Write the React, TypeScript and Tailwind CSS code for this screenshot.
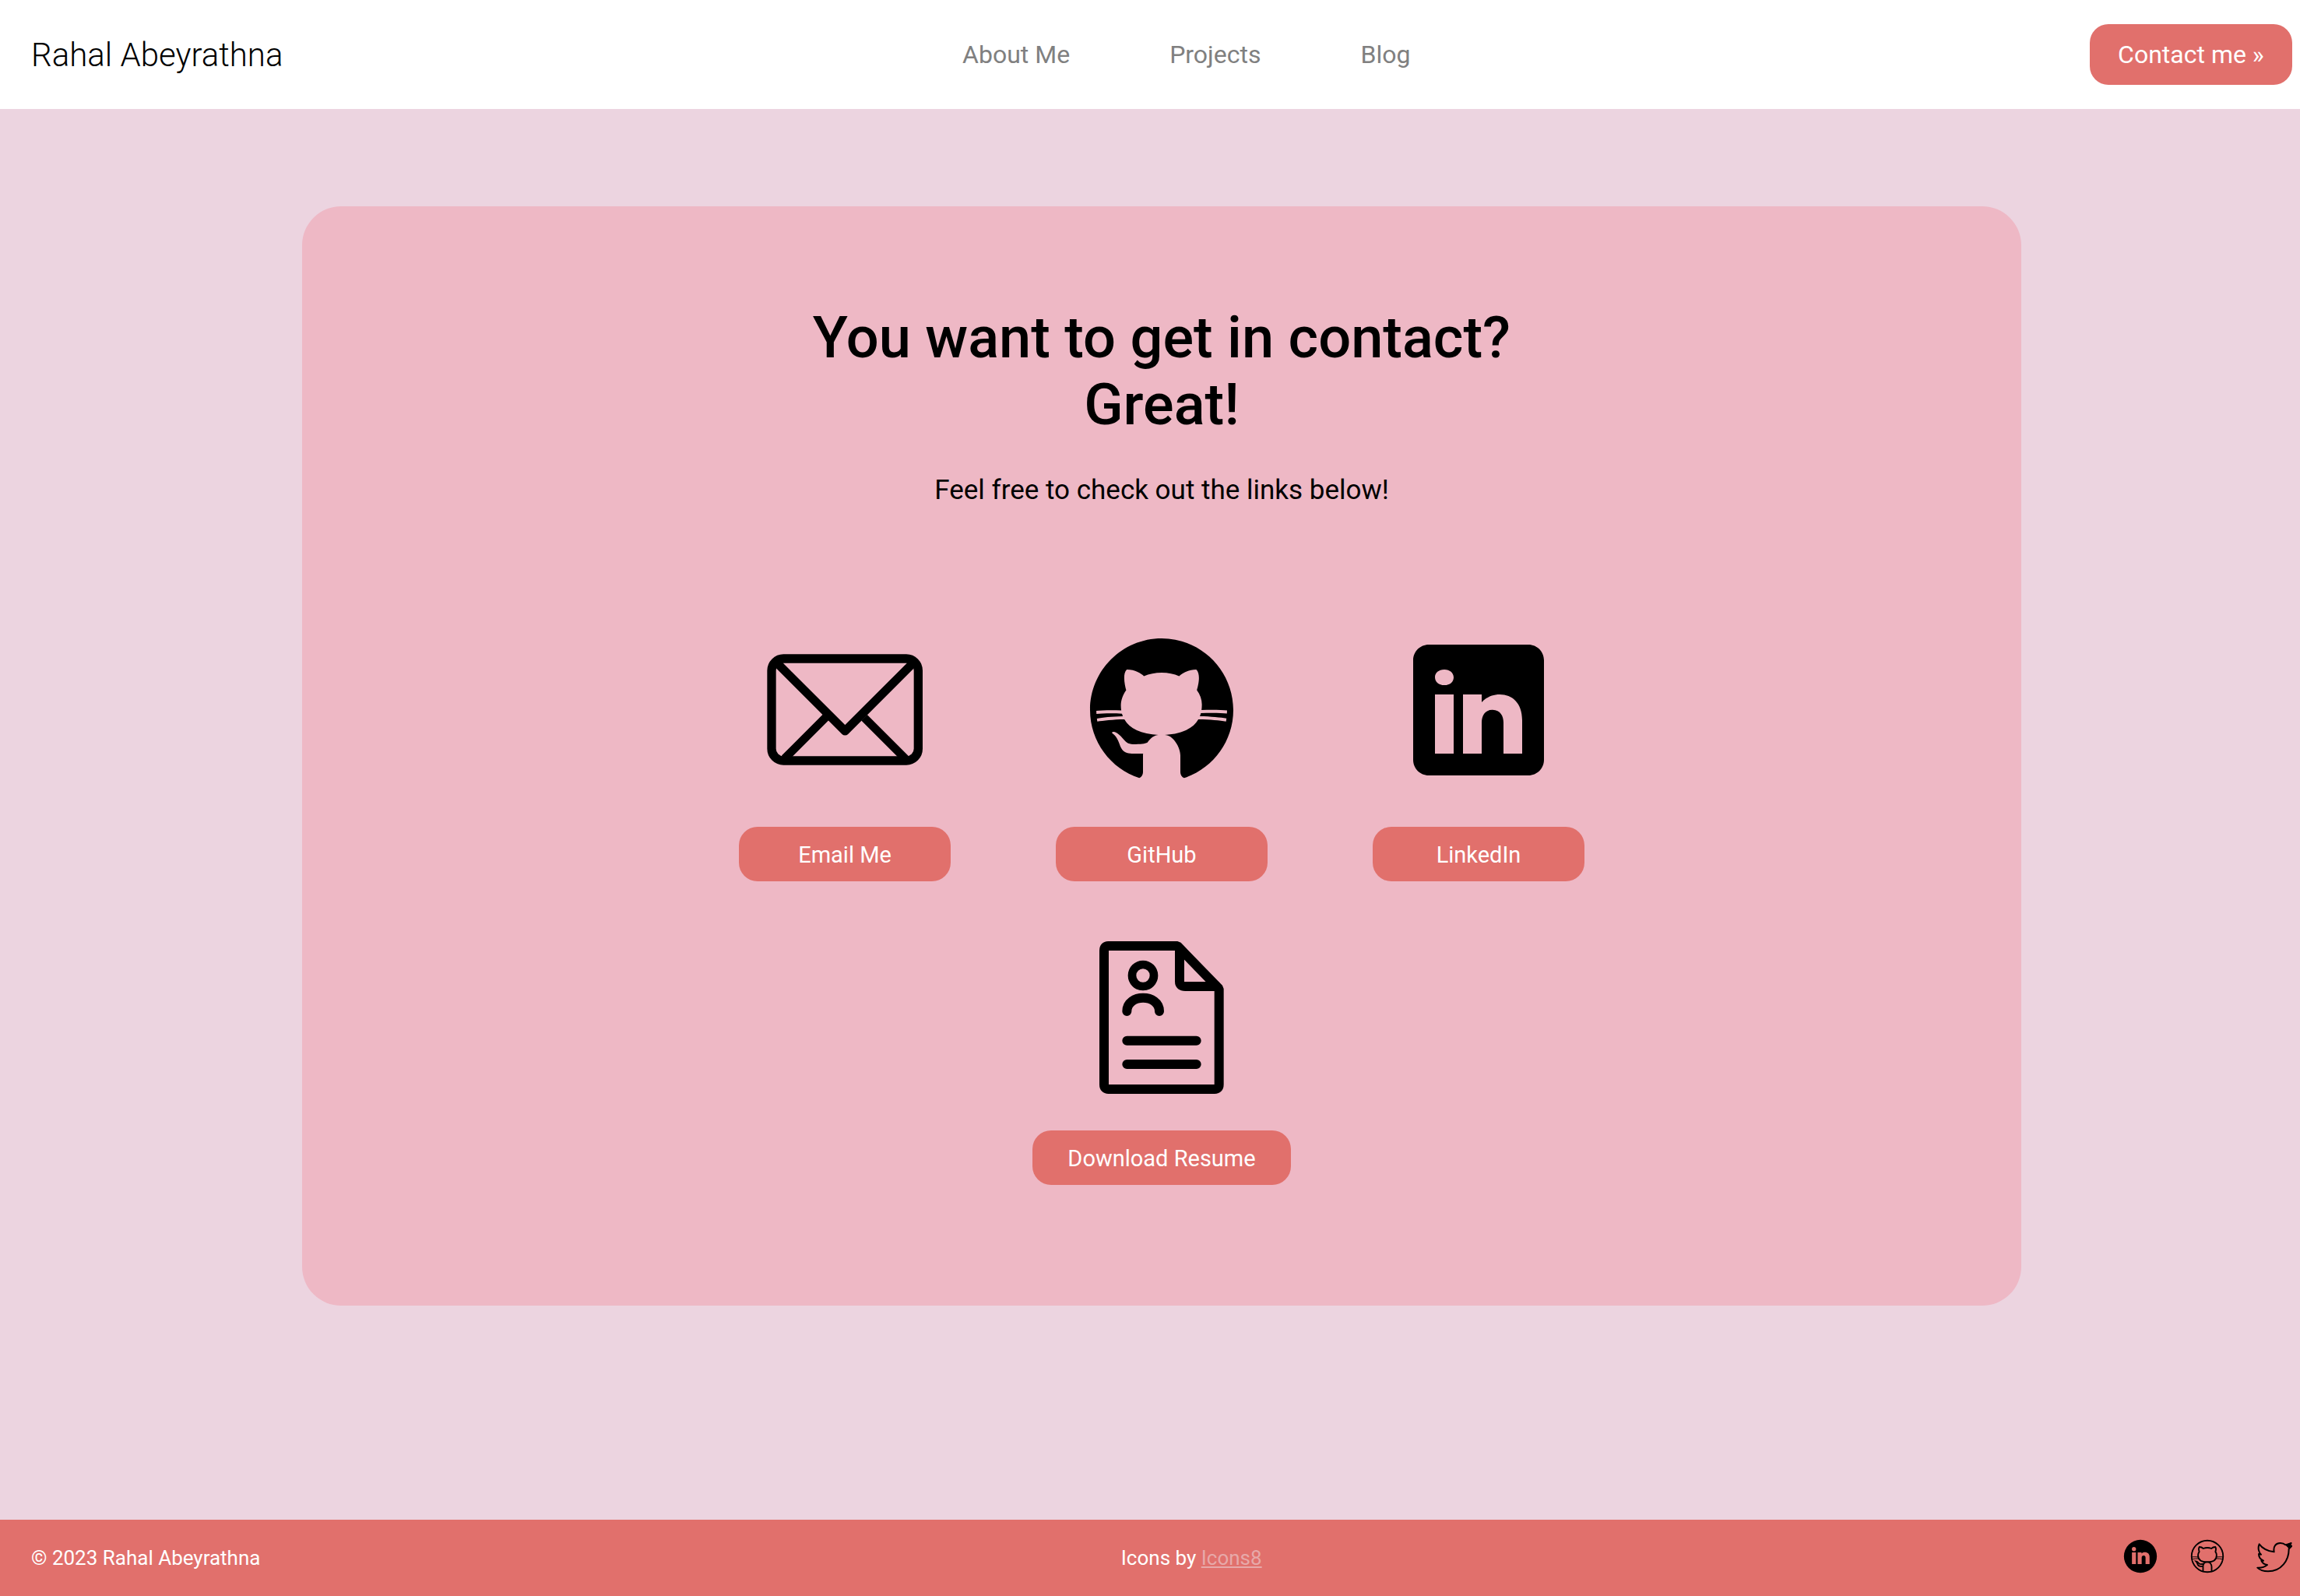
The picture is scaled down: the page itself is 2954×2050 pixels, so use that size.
import type { ReactNode } from "react";

function EnvelopeIcon() {
  return (
    <svg viewBox="0 0 600 600" className="h-[200px] w-[200px]" fill="none" stroke="#000" aria-hidden="true">
      <rect x="18" y="102" width="565" height="393" rx="46" strokeWidth="34" />
      <path d="M32 112 L301 381 L570 112" strokeWidth="33" strokeLinejoin="round" />
      <path d="M227 328 L68 487 M375 329 L534 488" strokeWidth="32" />
    </svg>
  );
}

function GitHubIcon() {
  return (
    <svg viewBox="0 0 50 50" className="h-[200px] w-[200px]" aria-hidden="true">
      <path d="M17.791,46.836C18.502,46.53,19,45.823,19,45v-5.4c0-0.197,0.016-0.402,0.041-0.61C19.027,38.994,19.014,38.997,19,39c0,0-3,0-3.6,0c-1.5,0-2.8-0.6-3.4-1.8c-0.7-1.3-1-3.5-2.8-4.7C8.9,32.3,9.1,32,9.7,32c0.6,0.1,1.9,0.9,2.7,2c0.9,1.1,1.8,2,3.4,2c2.487,0,3.82-0.125,4.622-0.555C21.356,34.056,22.649,33,24,33v-0.025c-5.668-0.182-9.289-2.066-10.975-4.975c-3.665,0.042-6.856,0.405-8.677,0.707c-0.058-0.327-0.108-0.656-0.151-0.987c1.797-0.296,4.843-0.647,8.345-0.714c-0.112-0.276-0.209-0.559-0.291-0.849c-3.511-0.178-6.541-0.039-8.187,0.097c-0.02-0.332-0.047-0.663-0.051-0.999c1.649-0.135,4.597-0.27,8.018-0.111c-0.079-0.5-0.13-1.011-0.13-1.543c0-1.7,0.6-3.5,1.7-5c-0.5-1.7-1.2-5.3,0.2-6.6c2.7,0,4.6,1.3,5.5,2.1C21,13.4,22.9,13,25,13s4,0.4,5.6,1.1c0.9-0.8,2.8-2.1,5.5-2.1c1.5,1.4,0.7,5,0.2,6.6c1.1,1.5,1.7,3.2,1.6,5c0,0.484-0.045,0.951-0.11,1.409c3.499-0.172,6.527-0.034,8.204,0.102c-0.002,0.337-0.033,0.666-0.051,0.999c-1.671-0.138-4.775-0.28-8.359-0.089c-0.089,0.336-0.197,0.663-0.325,0.98c3.546,0.046,6.665,0.389,8.548,0.689c-0.043,0.332-0.093,0.661-0.151,0.987c-1.912-0.306-5.171-0.664-8.879-0.682C35.112,30.873,31.557,32.75,26,32.969V33c2.6,0,5,3.9,5,6.6V45c0,0.823,0.498,1.53,1.209,1.836C41.37,43.804,48,35.164,48,25C48,12.318,37.683,2,25,2S2,12.318,2,25C2,35.164,8.63,43.804,17.791,46.836z" />
    </svg>
  );
}

function LinkedInIcon() {
  return (
    <svg viewBox="0 0 50 50" className="h-[200px] w-[200px]" aria-hidden="true">
      <path d="M41,4H9C6.24,4,4,6.24,4,9v32c0,2.76,2.24,5,5,5h32c2.76,0,5-2.24,5-5V9C46,6.24,43.76,4,41,4z M17,20v19h-6V20H17z M11,14.47c0-1.4,1.2-2.47,3-2.47s2.93,1.07,3,2.47c0,1.4-1.12,2.53-3,2.53C12.2,17,11,15.87,11,14.47z M39,39h-6c0,0,0-9.26,0-10c0-2-1-4-3.5-4.04h-0.08C27,24.96,26,27.02,26,29c0,0.91,0,10,0,10h-6V20h6v2.56c0,0,1.93-2.56,5.81-2.56c3.97,0,7.19,2.73,7.19,8.26V39z" />
    </svg>
  );
}

function ResumeIcon() {
  return (
    <svg viewBox="0 0 630 630" className="h-[210px] w-[210px]" fill="none" stroke="#000" strokeWidth="36" aria-hidden="true">
      <path d="M376 39 H109 Q93 39 93 57 V573 Q93 591 110 591 H519 Q536 591 536 573 V204 Z" strokeLinejoin="bevel" />
      <path d="M384 40 V176 Q384 195 406 195 H536" />
      <circle cx="243" cy="153" r="42" strokeWidth="32" />
      <path d="M181 291 C181 222 306 222 306 291" strokeLinecap="round" />
      <path d="M181 404 H449 M181 495 H449" strokeLinecap="round" />
    </svg>
  );
}

function LinkedInSmall() {
  return (
    <svg viewBox="0 0 50 50" className="h-[46px] w-[46px]" aria-hidden="true">
      <path
        fillRule="evenodd"
        d="M25 2a23 23 0 1 0 0 46a23 23 0 1 0 0-46z M16 12a2.9 2.9 0 1 1 0 5.8a2.9 2.9 0 0 1 0-5.8z M13.2 19.6h5.6v16.2h-5.6z M21.2 19.6h5.4v1.6c1-1.1 2.6-1.8 4.6-1.8c4 0 6.6 2.4 6.6 6.8v9.6h-5.6v-8.8c0-2-1-3-2.6-3s-2.8 1-2.8 3v8.8h-5.6z"
      />
    </svg>
  );
}

function GitHubSmall() {
  return (
    <svg viewBox="0 0 50 50" className="h-[46px] w-[46px]" fill="none" stroke="#000" strokeWidth="2" aria-hidden="true">
      <circle cx="25" cy="25" r="22" />
      <path d="M13.7 18.6C13.2 16.9 12.6 13.3 13.8 12C16.6 12 18.5 13.3 19.4 14.1C21 13.4 22.9 13 25 13s4 .4 5.6 1.1C31.5 13.3 33.4 12 36.2 12C37.4 13.4 36.8 17 36.3 18.6C37.4 20.1 38 21.8 37.9 23.6C37.9 29.8 33.2 33 25 33S12 29.8 12 23.6C12 21.9 12.6 20.1 13.7 18.6z" />
      <path d="M19 47V38.5C19 35.5 21.5 33 24 33H26C28.6 33 31 36.5 31 39.6V47" />
      <path d="M20.4 35.5C19.500 36 18 36 15.800 36C14.200 36 13.300 35.100 12.400 34C11.600 32.900 10.300 32.100 9 32C10.700 33.700 11.300 35.900 12 37.200C12.600 38.400 13.900 39 15.400 39H19" />
      <path d="M3 26C6 25.7 9 25.7 12.2 26M3.5 29C6.5 28.5 9.5 28.2 13 28.1M37.8 26C41 25.7 44 25.7 47 26M37 28.1C40.5 28.2 43.5 28.5 46.5 29" strokeWidth="1" />
    </svg>
  );
}

function TwitterSmall() {
  return (
    <svg viewBox="0 0 138 138" className="h-[46px] w-[46px]" fill="none" stroke="#000" strokeWidth="6" strokeLinejoin="round" aria-hidden="true">
      <path d="M11 22C24 40 44 49 68 52C64 30 76 18 92 18C101 18 107 20 112 25C119 24 126 21 134 18C132 24 129 27 125 30L136 29C133 34 129 37 125 40C126 84 96 127 45 127C28 127 13 122 4 113C18 114 32 110 42 102C31 101 23 95 19 86H27C16 81 9 72 9 60L18 62C8 53 5 36 11 22Z" />
      <path d="M112 25L133 19L124 30L135 30L125 38Z" fill="#000" strokeWidth="2" />
    </svg>
  );
}

const navLinks = ["About Me", "Projects", "Blog"];

function ContactItem({ icon, label, wide = false }: { icon: ReactNode; label: string; wide?: boolean }) {
  return (
    <div className={wide ? "flex flex-col items-center gap-10" : "flex flex-col items-center gap-[50px]"}>
      {icon}
      <button
        type="button"
        className={
          wide
            ? "h-[70px] w-[332px] rounded-3xl bg-[#e1706c] pt-[2px] text-[29px] leading-[34px] text-white"
            : "h-[70px] w-[272px] rounded-3xl bg-[#e1706c] pt-[2px] text-[29px] leading-[34px] text-white"
        }
      >
        {label}
      </button>
    </div>
  );
}

export default function App() {
  return (
    <div className="flex min-h-screen flex-col bg-[#ecd4e0] font-[Roboto,sans-serif] text-black">
      <header className="flex h-[140px] items-center justify-between bg-white pr-[10px] pl-10">
        <a href="#home" className="pt-[2px] text-[42px] leading-[50px] font-light">
          Rahal Abeyrathna
        </a>
        <nav className="flex gap-32 text-[32px] leading-[38px] text-[#808080]">
          {navLinks.map((label) => (
            <a key={label} href={"#" + label.toLowerCase().replace(" ", "-")}>
              {label}
            </a>
          ))}
        </nav>
        <button type="button" className="h-[78px] w-[260px] rounded-3xl bg-[#e1706c] text-[32px] leading-[38px] text-white">
          Contact me »
        </button>
      </header>

      <main className="flex-1 pt-[125px] pr-[358px] pb-[275px] pl-[388px]">
        <section className="flex flex-col items-center rounded-[50px] bg-[#eeb8c5] pt-[126px] pb-[155px]">
          <h1 className="text-center text-[74px] leading-[86px] font-medium">
            You want to get in contact?
            <br />
            Great!
          </h1>
          <p className="mt-[46px] text-[35px] leading-[42px]">Feel free to check out the links below!</p>
          <div className="mt-[161px] flex flex-wrap justify-center gap-[135px]">
            <ContactItem icon={<EnvelopeIcon />} label="Email Me" />
            <ContactItem icon={<GitHubIcon />} label="GitHub" />
            <ContactItem icon={<LinkedInIcon />} label="LinkedIn" />
          </div>
          <div className="mt-[70px]">
            <ContactItem icon={<ResumeIcon />} label="Download Resume" wide />
          </div>
        </section>
      </main>

      <footer className="flex h-[98px] items-center justify-between bg-[#e1706c] pr-[10px] pl-10 text-[26px] leading-[30px] text-white">
        <p>© 2023 Rahal Abeyrathna</p>
        <p>
          Icons by{" "}
          <a href="#icons8" className="text-[#e7a9a9] underline">
            Icons8
          </a>
        </p>
        <div className="flex gap-10 pb-1">
          <a href="#linkedin" aria-label="LinkedIn">
            <LinkedInSmall />
          </a>
          <a href="#github" aria-label="GitHub">
            <GitHubSmall />
          </a>
          <a href="#twitter" aria-label="Twitter">
            <TwitterSmall />
          </a>
        </div>
      </footer>
    </div>
  );
}
